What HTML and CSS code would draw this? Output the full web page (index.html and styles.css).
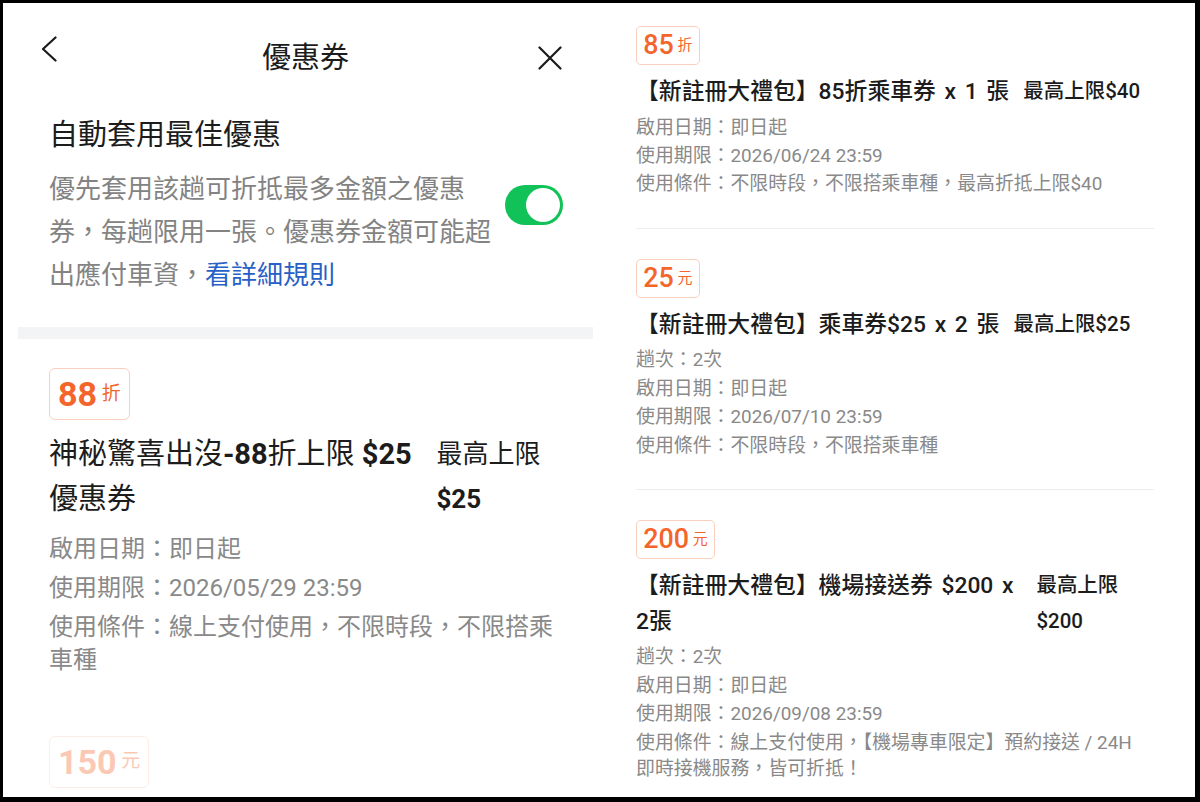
FILE: index.html
```html
<!DOCTYPE html>
<html lang="zh-Hant">
<head>
    <meta charset="UTF-8">
    <meta name="viewport" content="width=device-width, initial-scale=1.0">
    <title>優惠券</title>
    <link rel="stylesheet" href="styles.css">
</head>
<body>
    <div class="frame">
        <!-- Left screenshot: coupon page header + first coupon -->
        <section class="panel panel-left">
            <header class="nav">
                <svg class="nav-back" width="16" height="26" viewBox="0 0 16 26">
                    <path d="M14.5 1.5 L2 13 L14.5 24.5" fill="none" stroke="#1a1a1a" stroke-width="2.2" stroke-linecap="round" stroke-linejoin="round"/>
                </svg>
                <h1 class="nav-title">優惠券</h1>
                <svg class="nav-close" width="24" height="24" viewBox="0 0 24 24">
                    <path d="M1.5 1.5 L22.5 22.5 M22.5 1.5 L1.5 22.5" fill="none" stroke="#1a1a1a" stroke-width="2.2" stroke-linecap="round"/>
                </svg>
            </header>

            <div class="auto">
                <h2 class="auto-title">自動套用最佳優惠</h2>
                <div class="auto-row">
                    <p class="auto-desc">優先套用該趟可折抵最多金額之優惠券，每趟限用一張。優惠券金額可能超出應付車資，<a class="auto-link" href="#">看詳細規則</a></p>
                    <span class="switch"><span class="switch-knob"></span></span>
                </div>
            </div>

            <div class="band"></div>

            <article class="coupon">
                <div class="badge"><span class="badge-num">88</span><span class="badge-unit">折</span></div>
                <div class="coupon-head">
                    <h3 class="coupon-title">神秘驚喜出沒<b>-88</b>折上限 <b>$25</b> 優惠券</h3>
                    <div class="coupon-cap">最高上限 <b>$25</b></div>
                </div>
                <ul class="coupon-info">
                    <li>啟用日期：即日起</li>
                    <li>使用期限：2026/05/29 23:59</li>
                    <li>使用條件：線上支付使用，不限時段，不限搭乘車種</li>
                </ul>
            </article>

            <article class="coupon coupon-faded">
                <div class="badge"><span class="badge-num">150</span><span class="badge-unit">元</span></div>
            </article>
        </section>

        <!-- Right screenshot: new member coupons -->
        <section class="panel panel-right">
            <article class="coupon">
                <div class="badge"><span class="badge-num">85</span><span class="badge-unit">折</span></div>
                <div class="coupon-head">
                    <h3 class="coupon-title">【新註冊大禮包】85折乘車券 x 1 張</h3>
                    <div class="coupon-cap">最高上限$40</div>
                </div>
                <ul class="coupon-info">
                    <li>啟用日期：即日起</li>
                    <li>使用期限：2026/06/24 23:59</li>
                    <li>使用條件：不限時段，不限搭乘車種，最高折抵上限$40</li>
                </ul>
            </article>

            <article class="coupon">
                <div class="badge"><span class="badge-num">25</span><span class="badge-unit">元</span></div>
                <div class="coupon-head">
                    <h3 class="coupon-title">【新註冊大禮包】乘車券$25 x 2 張</h3>
                    <div class="coupon-cap">最高上限$25</div>
                </div>
                <ul class="coupon-info">
                    <li>趟次：2次</li>
                    <li>啟用日期：即日起</li>
                    <li>使用期限：2026/07/10 23:59</li>
                    <li>使用條件：不限時段，不限搭乘車種</li>
                </ul>
            </article>

            <article class="coupon">
                <div class="badge"><span class="badge-num">200</span><span class="badge-unit">元</span></div>
                <div class="coupon-head">
                    <h3 class="coupon-title">【新註冊大禮包】機場接送券 $200 x 2張</h3>
                    <div class="coupon-cap">最高上限$200</div>
                </div>
                <ul class="coupon-info">
                    <li>趟次：2次</li>
                    <li>啟用日期：即日起</li>
                    <li>使用期限：2026/09/08 23:59</li>
                    <li>使用條件：線上支付使用，【機場專車限定】預約接送 / 24H 即時接機服務，皆可折抵！</li>
                </ul>
            </article>
        </section>
    </div>
</body>
</html>
```

FILE: styles.css
```css
body {
    margin: 0;
    font-family: Roboto, "Noto Sans CJK TC", sans-serif;
    background-color: #fff;
    color: #1c1c1c;
}

.frame {
    width: 1200px;
    height: 802px;
    box-sizing: border-box;
    border: solid #000;
    border-width: 3px 5px 5px 3px;
    padding-left: 15px;
    display: flex;
    gap: 19px;
    overflow: hidden;
    background-color: #fff;
}

.panel {
    flex: none;
    box-sizing: border-box;
    overflow: hidden;
}

.panel-left {
    width: 575px;
    font-size: 24px;
}

.panel-right {
    width: 566px;
    font-size: 18.9px;
    padding: 23px 24px 0;
}

/* header */
.nav {
    height: 110px;
    padding: 0 23px;
    display: grid;
    grid-template-columns: 1fr auto 1fr;
    align-items: center;
}

.nav-back {
    align-self: start;
    margin-top: 33px;
}

.nav-title {
    margin: 0;
    font-size: 29px;
    font-weight: 400;
    line-height: 1;
}

.nav-close {
    justify-self: end;
    margin-right: 8px;
}

/* auto apply */
.auto {
    padding: 2px 30px 0 31px;
}

.auto-title {
    margin: 0;
    font-size: 29px;
    font-weight: 400;
    line-height: 40px;
}

.auto-row {
    display: flex;
    justify-content: space-between;
    margin-top: 13px;
}

.auto-desc {
    margin: 0;
    width: 450px;
    font-size: 26px;
    line-height: 43px;
    color: #838383;
}

.auto-link {
    color: #2760c6;
    text-decoration: none;
}

.switch {
    flex: none;
    width: 58px;
    height: 40px;
    margin-top: 17px;
    padding: 3px;
    box-sizing: border-box;
    border-radius: 20px;
    background-color: #10c257;
    display: flex;
    justify-content: flex-end;
}

.switch-knob {
    width: 34px;
    height: 34px;
    border-radius: 50%;
    background-color: #fff;
}

.band {
    height: 12px;
    margin-top: 30px;
    background-color: #f3f4f6;
}

/* coupon card */
.panel-left .coupon {
    padding: 29px 31px 29px;
}

.panel-right .coupon {
    padding: 30px 0 30px;
    border-bottom: 1px solid #ededed;
}

.panel-right .coupon:first-child {
    padding-top: 0;
}

.coupon-faded {
    opacity: 0.35;
}

.badge {
    display: inline-flex;
    align-items: center;
    gap: 0.2em;
    height: 52px;
    padding: 0 0.33em;
    box-sizing: border-box;
    border: 1px solid #fbcfbb;
    border-radius: 0.25em;
    color: #f4652b;
}

.panel-right .badge {
    height: 39px;
}

.badge-num {
    font-size: 1.42em;
    font-weight: 700;
    line-height: 1;
}

.panel-right .badge-num {
    font-weight: 500;
}

.badge-unit {
    font-size: 0.79em;
    line-height: 1;
}

.coupon-head {
    display: flex;
    gap: 0.62em;
    margin-top: 0.4em;
    font-size: 1.208em;
    line-height: 1.55em;
    font-weight: 500;
    color: #1c1c1c;
}

.panel-left .coupon-head {
    font-weight: 400;
}

.coupon-head b {
    font-weight: 700;
}

.coupon-title {
    margin: 0;
    font-size: 1em;
    font-weight: inherit;
}

.panel-right .coupon-title {
    word-spacing: 3px;
}

.coupon-cap {
    font-size: 0.897em;
}

.coupon-info {
    list-style: none;
    margin: 0.48em 0 0;
    padding: 0;
    display: flex;
    flex-direction: column;
    gap: 0.22em;
    line-height: 1.4;
    color: #898989;
}

.panel-right .coupon-info {
    margin-top: 5px;
    gap: 2px;
}
```
